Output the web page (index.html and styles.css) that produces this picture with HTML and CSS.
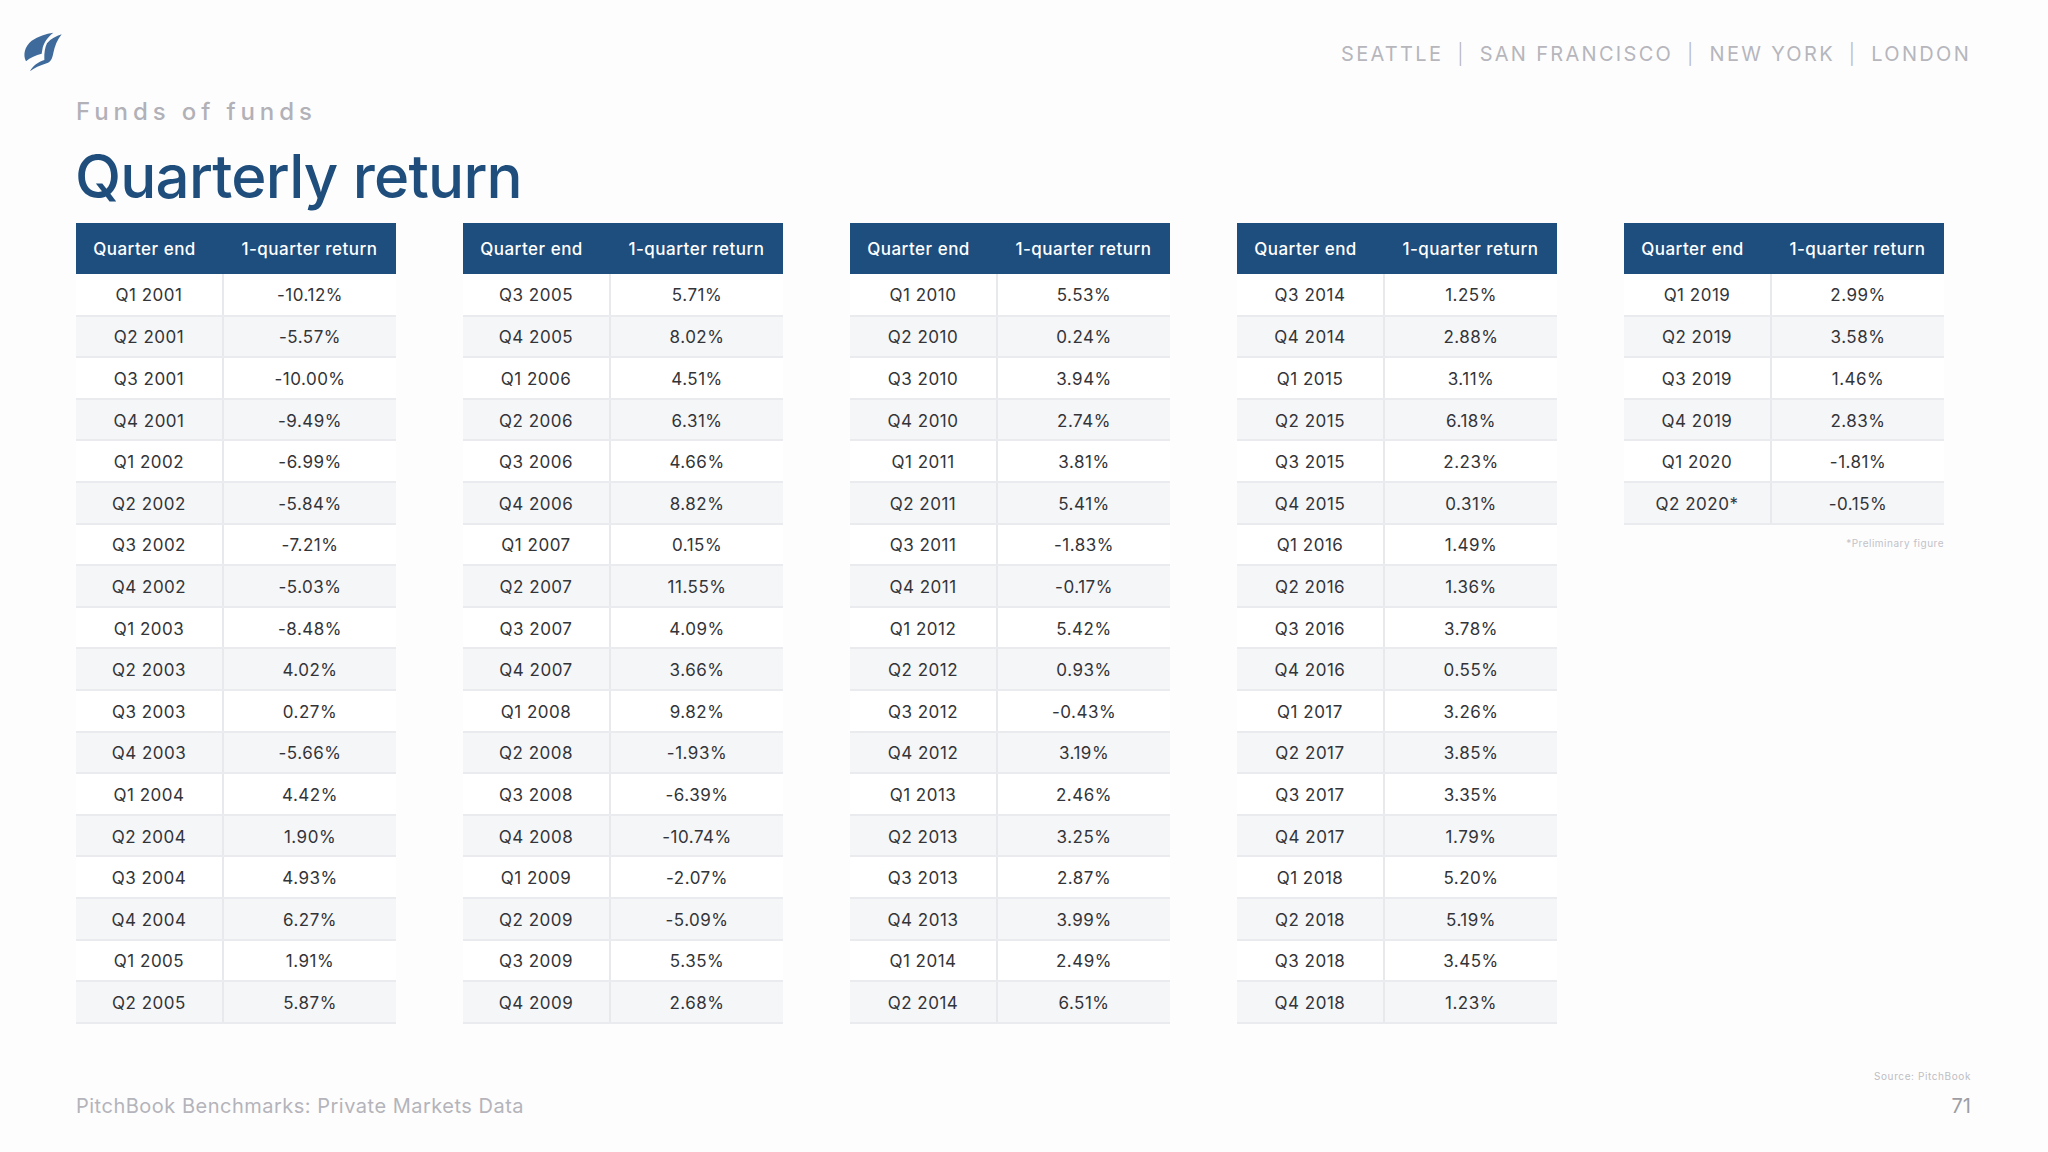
FILE: index.html
```html
<!DOCTYPE html>
<html lang="en">
<head>
<meta charset="utf-8">
<title>Quarterly return</title>
<link rel="stylesheet" href="styles.css">
</head>
<body>
<div class="page">
  <header class="topbar">
    <svg class="logo" viewBox="0 0 144 144" width="48" height="48" aria-label="PitchBook">
      <path d="M18 100 C8 80 14 55 35 38 C55 24 78 17 100 14 C82 28 70 45 67 65 L65 77 C48 81 30 89 18 100 Z" fill="#3f6b9c"/>
      <path d="M30 130 C38 113 55 102 73 96 C72 76 75 58 81 46 C93 32 108 24 125 19 C112 35 104 55 100 75 C97 92 92 102 80 106 C60 112 42 120 30 130 Z" fill="#3f6b9c"/>
    </svg>
    <div class="cities">SEATTLE <span class="sep">|</span> SAN FRANCISCO <span class="sep">|</span> NEW YORK <span class="sep">|</span> LONDON</div>
  </header>

  <main class="content">
    <div class="kicker">Funds of funds</div>
    <h1 class="title">Quarterly return</h1>

    <div class="tables">
      <table class="qtable">
        <thead><tr><th class="c1">Quarter end</th><th class="c2">1-quarter return</th></tr></thead>
        <tbody>
          <tr><td>Q1 2001</td><td>-10.12%</td></tr>
          <tr><td>Q2 2001</td><td>-5.57%</td></tr>
          <tr><td>Q3 2001</td><td>-10.00%</td></tr>
          <tr><td>Q4 2001</td><td>-9.49%</td></tr>
          <tr><td>Q1 2002</td><td>-6.99%</td></tr>
          <tr><td>Q2 2002</td><td>-5.84%</td></tr>
          <tr><td>Q3 2002</td><td>-7.21%</td></tr>
          <tr><td>Q4 2002</td><td>-5.03%</td></tr>
          <tr><td>Q1 2003</td><td>-8.48%</td></tr>
          <tr><td>Q2 2003</td><td>4.02%</td></tr>
          <tr><td>Q3 2003</td><td>0.27%</td></tr>
          <tr><td>Q4 2003</td><td>-5.66%</td></tr>
          <tr><td>Q1 2004</td><td>4.42%</td></tr>
          <tr><td>Q2 2004</td><td>1.90%</td></tr>
          <tr><td>Q3 2004</td><td>4.93%</td></tr>
          <tr><td>Q4 2004</td><td>6.27%</td></tr>
          <tr><td>Q1 2005</td><td>1.91%</td></tr>
          <tr><td>Q2 2005</td><td>5.87%</td></tr>
        </tbody>
      </table>

      <table class="qtable">
        <thead><tr><th class="c1">Quarter end</th><th class="c2">1-quarter return</th></tr></thead>
        <tbody>
          <tr><td>Q3 2005</td><td>5.71%</td></tr>
          <tr><td>Q4 2005</td><td>8.02%</td></tr>
          <tr><td>Q1 2006</td><td>4.51%</td></tr>
          <tr><td>Q2 2006</td><td>6.31%</td></tr>
          <tr><td>Q3 2006</td><td>4.66%</td></tr>
          <tr><td>Q4 2006</td><td>8.82%</td></tr>
          <tr><td>Q1 2007</td><td>0.15%</td></tr>
          <tr><td>Q2 2007</td><td>11.55%</td></tr>
          <tr><td>Q3 2007</td><td>4.09%</td></tr>
          <tr><td>Q4 2007</td><td>3.66%</td></tr>
          <tr><td>Q1 2008</td><td>9.82%</td></tr>
          <tr><td>Q2 2008</td><td>-1.93%</td></tr>
          <tr><td>Q3 2008</td><td>-6.39%</td></tr>
          <tr><td>Q4 2008</td><td>-10.74%</td></tr>
          <tr><td>Q1 2009</td><td>-2.07%</td></tr>
          <tr><td>Q2 2009</td><td>-5.09%</td></tr>
          <tr><td>Q3 2009</td><td>5.35%</td></tr>
          <tr><td>Q4 2009</td><td>2.68%</td></tr>
        </tbody>
      </table>

      <table class="qtable">
        <thead><tr><th class="c1">Quarter end</th><th class="c2">1-quarter return</th></tr></thead>
        <tbody>
          <tr><td>Q1 2010</td><td>5.53%</td></tr>
          <tr><td>Q2 2010</td><td>0.24%</td></tr>
          <tr><td>Q3 2010</td><td>3.94%</td></tr>
          <tr><td>Q4 2010</td><td>2.74%</td></tr>
          <tr><td>Q1 2011</td><td>3.81%</td></tr>
          <tr><td>Q2 2011</td><td>5.41%</td></tr>
          <tr><td>Q3 2011</td><td>-1.83%</td></tr>
          <tr><td>Q4 2011</td><td>-0.17%</td></tr>
          <tr><td>Q1 2012</td><td>5.42%</td></tr>
          <tr><td>Q2 2012</td><td>0.93%</td></tr>
          <tr><td>Q3 2012</td><td>-0.43%</td></tr>
          <tr><td>Q4 2012</td><td>3.19%</td></tr>
          <tr><td>Q1 2013</td><td>2.46%</td></tr>
          <tr><td>Q2 2013</td><td>3.25%</td></tr>
          <tr><td>Q3 2013</td><td>2.87%</td></tr>
          <tr><td>Q4 2013</td><td>3.99%</td></tr>
          <tr><td>Q1 2014</td><td>2.49%</td></tr>
          <tr><td>Q2 2014</td><td>6.51%</td></tr>
        </tbody>
      </table>

      <table class="qtable">
        <thead><tr><th class="c1">Quarter end</th><th class="c2">1-quarter return</th></tr></thead>
        <tbody>
          <tr><td>Q3 2014</td><td>1.25%</td></tr>
          <tr><td>Q4 2014</td><td>2.88%</td></tr>
          <tr><td>Q1 2015</td><td>3.11%</td></tr>
          <tr><td>Q2 2015</td><td>6.18%</td></tr>
          <tr><td>Q3 2015</td><td>2.23%</td></tr>
          <tr><td>Q4 2015</td><td>0.31%</td></tr>
          <tr><td>Q1 2016</td><td>1.49%</td></tr>
          <tr><td>Q2 2016</td><td>1.36%</td></tr>
          <tr><td>Q3 2016</td><td>3.78%</td></tr>
          <tr><td>Q4 2016</td><td>0.55%</td></tr>
          <tr><td>Q1 2017</td><td>3.26%</td></tr>
          <tr><td>Q2 2017</td><td>3.85%</td></tr>
          <tr><td>Q3 2017</td><td>3.35%</td></tr>
          <tr><td>Q4 2017</td><td>1.79%</td></tr>
          <tr><td>Q1 2018</td><td>5.20%</td></tr>
          <tr><td>Q2 2018</td><td>5.19%</td></tr>
          <tr><td>Q3 2018</td><td>3.45%</td></tr>
          <tr><td>Q4 2018</td><td>1.23%</td></tr>
        </tbody>
      </table>

      <div class="lastcol">
        <table class="qtable">
          <thead><tr><th class="c1">Quarter end</th><th class="c2">1-quarter return</th></tr></thead>
          <tbody>
            <tr><td>Q1 2019</td><td>2.99%</td></tr>
            <tr><td>Q2 2019</td><td>3.58%</td></tr>
            <tr><td>Q3 2019</td><td>1.46%</td></tr>
            <tr><td>Q4 2019</td><td>2.83%</td></tr>
            <tr><td>Q1 2020</td><td>-1.81%</td></tr>
            <tr><td>Q2 2020*</td><td>-0.15%</td></tr>
          </tbody>
        </table>
        <div class="note">*Preliminary figure</div>
      </div>
    </div>
  </main>

  <footer class="footer">
    <div class="source">Source: PitchBook</div>
    <div class="footrow">
      <span class="foottitle">PitchBook Benchmarks: Private Markets Data</span>
      <span class="pagenum">71</span>
    </div>
  </footer>
</div>
</body>
</html>
```

FILE: styles.css
```css
* { box-sizing: border-box; }

html, body {
  margin: 0;
  padding: 0;
  background: #ffffff;
}

body {
  font-family: "Inter", "Noto Sans", sans-serif;
  color: #333333;
}

.page {
  width: 2048px;
  height: 1152px;
  display: flex;
  flex-direction: column;
  background: #fdfdfe;
}

.topbar {
  display: flex;
  justify-content: space-between;
  align-items: flex-start;
  padding: 28px 77px 0 20px;
  height: 74px;
}

.logo {
  display: block;
}

.cities {
  margin-top: 14px;
  font-size: 20px;
  line-height: 24px;
  letter-spacing: 2.3px;
  color: #b6b6bc;
  font-weight: 400;
  white-space: nowrap;
}

.cities .sep {
  display: inline-block;
  margin: 0 6px;
  font-weight: 300;
}

.content {
  padding: 0 77px 0 76px;
}

.kicker {
  margin-top: 24px;
  font-size: 24px;
  line-height: 28px;
  letter-spacing: 4.9px;
  color: #b1b1b7;
  font-weight: 500;
}

.title {
  margin: 18px 0 0 -1px;
  font-size: 60px;
  line-height: 64px;
  font-weight: 500;
  color: #1f4e7d;
  letter-spacing: -0.8px;
}

.tables {
  display: flex;
  gap: 67px;
  margin-top: 15px;
  align-items: flex-start;
}

.qtable {
  width: 320px;
  border-collapse: collapse;
  table-layout: fixed;
  font-size: 17px;
}

.qtable th {
  background: #1e4e7d;
  color: #ffffff;
  font-weight: 500;
  height: 51px;
  padding: 0;
  text-align: center;
  letter-spacing: 0.5px;
}

.qtable th.c1 { width: 147px; padding-right: 10px; }
.qtable th.c2 { width: 173px; }

.qtable td {
  height: 41.6px;
  padding: 2px 0 0 0;
  text-align: center;
  color: #333438;
  border-bottom: 2px solid #e9ebee;
  letter-spacing: 0.5px;
}

.qtable td:first-child {
  border-right: 2px solid #e7e9ec;
}

.qtable tbody tr:nth-child(odd) td { background: #ffffff; }
.qtable tbody tr:nth-child(even) td { background: #f5f6f8; }

.lastcol {
  display: flex;
  flex-direction: column;
  align-items: flex-end;
}

.note {
  margin-top: 12px;
  font-size: 10px;
  color: #c2c2c8;
  letter-spacing: 0.5px;
}

.footer {
  margin-top: auto;
  padding: 0 77px 34px 76px;
}

.source {
  text-align: right;
  font-size: 10px;
  color: #bdbdc3;
  letter-spacing: 0.6px;
  margin-bottom: 12px;
}

.footrow {
  display: flex;
  justify-content: space-between;
  align-items: baseline;
}

.foottitle {
  font-size: 20px;
  color: #b4b4ba;
  letter-spacing: 0.5px;
}

.pagenum {
  font-size: 20px;
  color: #9d9da3;
}
```
